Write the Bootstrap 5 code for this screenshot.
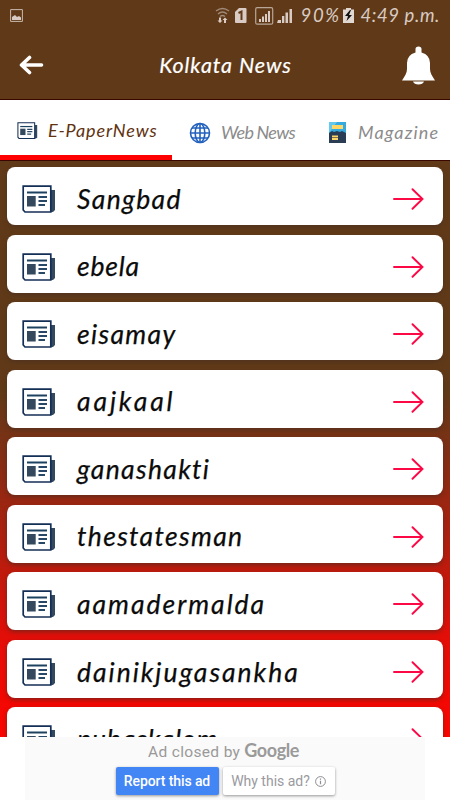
<!DOCTYPE html>
<html lang="en">
<head>
<meta charset="utf-8">
<meta name="viewport" content="width=device-width, initial-scale=1">
<title>Kolkata News</title>
<link href="https://cdn.jsdelivr.net/npm/bootstrap@5.3.0/dist/css/bootstrap.min.css" rel="stylesheet">
<style>
body{font-family:Lato,sans-serif;height:800px;overflow:hidden}
.screen{width:450px;height:800px}
.top-area{background:#603a18;height:100px;border-bottom:1px solid #3b0500}
.status{height:31px;padding:0 10px 0 10px;color:#d9cbc3;font-size:18.500px;font-style:italic}
.battery{letter-spacing:1.700px;width:43px}
.clock{letter-spacing:.6px;margin-left:6px}
.title{font-size:21.500px;font-style:italic;letter-spacing:.9px;padding-left:5px;-webkit-text-stroke:.2px #fff}
.app-bar{height:68px;padding:0 15px 0 19px}
.tabs{height:60px;font-size:18px;font-style:italic;color:#8b8b8b;white-space:nowrap}
.tab-on{width:172px;color:#5f3210;border-bottom:5px solid #f00;padding:5px 0 0 17px;gap:10px;letter-spacing:.9px}
.tab-web{padding:5px 0 0 17px;width:140px;gap:10px;letter-spacing:-.75px}
.tab-mag{padding:5px 0 0 17px;gap:12px;letter-spacing:1.150px}
.feed{height:577px;padding:6px 7px 7px;border-top:1px solid #3b0500;background:linear-gradient(#603a18 0%,#603a18 40%,#e60d08 84%,#fa0500 100%)}
.paper{height:58px;margin-bottom:9.550px;border-radius:8px;background:#fff;box-shadow:0 2px 4px rgba(70,45,35,.6);padding:0 18px 0 15px;flex:none}
.paper .news-icon{margin-top:6px}
.paper .go-icon{margin-top:6px}
.paper .label{font-size:26.500px;font-style:italic;color:#0b0b0b;margin-left:21px;line-height:1;padding-top:6px;white-space:nowrap;letter-spacing:1.350px;font-variant-ligatures:none;-webkit-text-stroke:.25px #0b0b0b}
.paper .sp-s{letter-spacing:.8px}
.paper .sp-l{letter-spacing:2.900px}
.paper .sp-m{letter-spacing:2px}
.paper .sp-t{letter-spacing:.9px}
.ad{height:63px;width:400px;margin-left:25px;background:#fafafa;font-family:Roboto,sans-serif;color:#999}
.ad-note{height:25px;font-size:15.500px;letter-spacing:.35px;padding-right:3px}
.ad-logo{font-family:Lato,sans-serif;font-size:18px;font-weight:700;margin-left:4px;letter-spacing:-.4px;color:#9a9a9a}
.ad-btn{height:28px;font-size:14px;border-radius:2px;box-shadow:0 1px 3px rgba(0,0,0,.4);margin-top:5px;white-space:nowrap}
.ad-report{background:#4285f4;color:#fff;width:103px;font-weight:500;letter-spacing:-.1px}
.ad-why{background:#fff;color:#9a9aa0;width:112px;gap:5px}
</style>
<script src="https://cdn.jsdelivr.net/npm/bootstrap@5.3.0/dist/js/bootstrap.bundle.min.js"></script>
</head>
<body>
<svg width="0" height="0" class="position-absolute">
<symbol id="news" viewBox="0 0 34 28"><path d="M29 5h4v20l-2 2h-3z" fill="#34495e"/><path d="M1.200 1.200h27.600V27H3L1.200 25z" fill="#fff" stroke="#142f55" stroke-width="1.700"/><path d="M5 7.500h20" stroke="#1d4260" stroke-width="2"/><path d="M5 11h8.700v10.500H5z" fill="#34495e"/><path d="M16.500 12H25M16.500 16H25M16.500 20H23" stroke="#274866" stroke-width="2"/></symbol>
<symbol id="arrow" viewBox="0 0 32 22"><path d="M1 11h28.500M19.500 1.200 29.500 11l-10 9.800" fill="none" stroke="#fb0845" stroke-width="1.900" stroke-linecap="round"/></symbol>
</svg>
<main class="screen d-flex flex-column bg-white">
<header class="top-area">
<div class="status d-flex align-items-center">
<svg width="13" height="13" viewBox="0 0 13 13"><path d="M.6.6h11.800v11.800H.6z" fill="none" stroke="#c9b9ad"/><path d="M2 11V8l3-2 2 2 2-1 2 1.500V11z" fill="#d9cbc3"/></svg>
<svg class="ms-auto me-2" width="79" height="18" viewBox="0 0 79 18">
<g fill="none" stroke="#a08a78" stroke-width="1.300"><path d="M3 4q6.500-5 13 0M5 7q4.500-4 9 0M7 9.500q2.500-2 5 0"/></g>
<path d="M6 10.500h2v3h1.500L7 16 4.500 13.500H6zM11 16h2v-3h1.500L12 10.500 9.500 13H11z" fill="#d9cbc3"/>
<path d="M22 5l4-4h6.500q1 0 1 1v13q0 1-1 1H23q-1 0-1-1z" fill="#d9cbc3"/><path d="M25.500 6l3-1.500V13" fill="none" stroke="#603a18" stroke-width="2"/>
<rect x="42.700" y=".7" width="17" height="16.500" rx="1.500" fill="none" stroke="#b8a698" stroke-width="1.200"/>
<g fill="#d9cbc3"><path d="M46 12h2v3h-2zM49 9.500h2V15h-2zM52 7h2v8h-2zM55 4h2v11h-2z"/><path d="M65 13h3v3h-4zM69 9h2.300v7H69zM72.500 5.500H75V16h-2.500zM76.500 2H79v14h-2.500z"/></g></svg>
<span class="battery">90%</span>
<svg width="11" height="15" viewBox="0 0 11 15"><path d="M0 1.500h3V0h5v1.500h3V15H0z" fill="#e2d8d2"/><path d="M7 2 2 8h3l-1.500 5L9 7H6l2-5z" fill="#111"/></svg>
<span class="clock">4:49 p.m.</span>
</div>
<div class="app-bar d-flex align-items-center justify-content-between text-white">
<svg width="25" height="20" viewBox="0 0 25 20"><path d="M22.500 10H3M10.500 2.500 2.500 10l8 7.500" fill="none" stroke="#fff" stroke-width="3.600" stroke-linecap="round" stroke-linejoin="round"/></svg>
<span class="title">Kolkata News</span>
<svg width="33" height="39" viewBox="0 0 33 39"><path fill="#fff" d="M13.500 6.500V3q0-2.500 3-2.500t3 2.500v3.500Q28 9 28 17v6c0 4 2 7 5 11.500H0C3 30 5 27 5 23v-6q0-8 8.500-10.500M11 35.500h11c-1 4-10 4-11 0"/></svg>
</div>
</header>
<nav class="tabs d-flex">
<div class="tab-on d-flex align-items-center"><svg width="21" height="17"><use href="#news"/></svg><span>E-PaperNews</span></div>
<div class="tab-web d-flex align-items-center"><svg width="22" height="22" viewBox="0 0 22 22"><circle cx="11" cy="11" r="9.500" fill="#fff"/><g fill="none" stroke="#2361bd" stroke-width="1.600"><circle cx="11" cy="11" r="9.500"/><ellipse cx="11" cy="11" rx="4.800" ry="9.500"/><path d="M11 1v20M1 11h20M3 6h16M3 16h16"/></g></svg><span>Web News</span></div>
<div class="tab-mag d-flex align-items-center"><svg width="17" height="21" viewBox="0 0 17 21"><path d="M0 0h17v21H0z" fill="#36a9df"/><path d="M0 0h8L0 11z" fill="#65c9ed"/><path d="M3 3h11v4H3z" fill="#ffd766"/><path d="M0 11l3-2 2 1 3-1 3 1 2-1 4 2v10H0z" fill="#2b3c55"/><path d="M3 13.500h6V18H3z" fill="#ffd766"/><path d="M3 15.500h6" stroke="#866f50"/></svg><span>Magazine</span></div>
</nav>
<section class="feed d-flex flex-column overflow-hidden">
<div class="paper d-flex align-items-center"><svg class="news-icon" width="34" height="28"><use href="#news"/></svg><span class="label">Sangbad</span><svg class="go-icon ms-auto" width="32" height="22"><use href="#arrow"/></svg></div>
<div class="paper d-flex align-items-center"><svg class="news-icon" width="34" height="28"><use href="#news"/></svg><span class="label sp-s">ebela</span><svg class="go-icon ms-auto" width="32" height="22"><use href="#arrow"/></svg></div>
<div class="paper d-flex align-items-center"><svg class="news-icon" width="34" height="28"><use href="#news"/></svg><span class="label">eisamay</span><svg class="go-icon ms-auto" width="32" height="22"><use href="#arrow"/></svg></div>
<div class="paper d-flex align-items-center"><svg class="news-icon" width="34" height="28"><use href="#news"/></svg><span class="label sp-l">aajkaal</span><svg class="go-icon ms-auto" width="32" height="22"><use href="#arrow"/></svg></div>
<div class="paper d-flex align-items-center"><svg class="news-icon" width="34" height="28"><use href="#news"/></svg><span class="label">ganashakti</span><svg class="go-icon ms-auto" width="32" height="22"><use href="#arrow"/></svg></div>
<div class="paper d-flex align-items-center"><svg class="news-icon" width="34" height="28"><use href="#news"/></svg><span class="label">thestatesman</span><svg class="go-icon ms-auto" width="32" height="22"><use href="#arrow"/></svg></div>
<div class="paper d-flex align-items-center"><svg class="news-icon" width="34" height="28"><use href="#news"/></svg><span class="label sp-m">aamadermalda</span><svg class="go-icon ms-auto" width="32" height="22"><use href="#arrow"/></svg></div>
<div class="paper d-flex align-items-center"><svg class="news-icon" width="34" height="28"><use href="#news"/></svg><span class="label sp-m">dainikjugasankha</span><svg class="go-icon ms-auto" width="32" height="22"><use href="#arrow"/></svg></div>
<div class="paper d-flex align-items-center"><svg class="news-icon" width="34" height="28"><use href="#news"/></svg><span class="label sp-t">pubaskalom</span><svg class="go-icon ms-auto" width="32" height="22"><use href="#arrow"/></svg></div>
</section>
<footer class="ad">
<div class="ad-note d-flex justify-content-center align-items-baseline"><span>Ad closed by</span><span class="ad-logo">Google</span></div>
<div class="d-flex justify-content-center gap-1">
<div class="ad-btn ad-report d-flex align-items-center justify-content-center">Report this ad</div>
<div class="ad-btn ad-why d-flex align-items-center justify-content-center"><span>Why this ad?</span><svg width="11" height="11" viewBox="0 0 11 11" fill="none" stroke="#8d8d92"><circle cx="5.500" cy="5.500" r="4.900"/><path d="M5.500 4.700v3.500M5.500 2.500v1.200" stroke-width="1.200"/></svg></div>
</div>
</footer>
</main>
</body>
</html>
